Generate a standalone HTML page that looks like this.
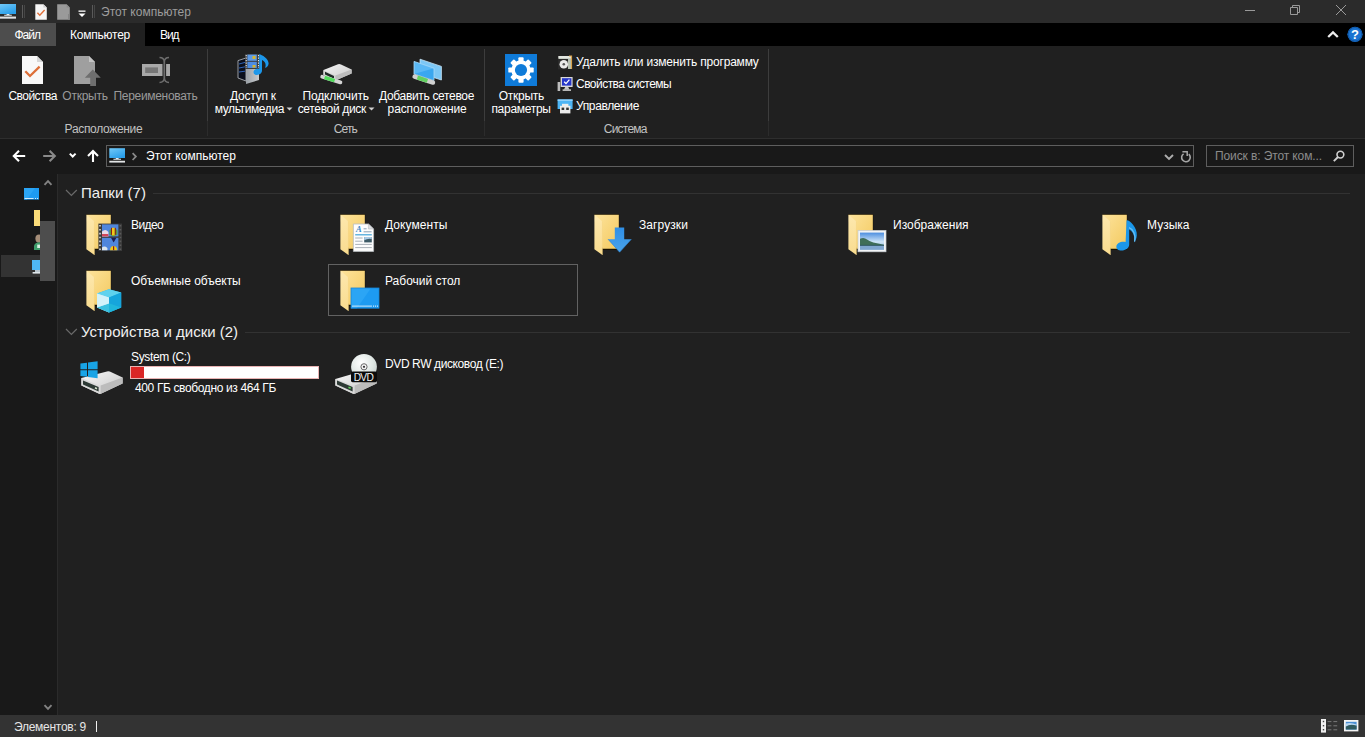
<!DOCTYPE html>
<html lang="ru">
<head>
<meta charset="utf-8">
<title>Этот компьютер</title>
<style>
*{box-sizing:border-box;margin:0;padding:0}
html,body{width:1365px;height:737px;overflow:hidden;background:#202020}
body{font-family:"Liberation Sans","DejaVu Sans",sans-serif;font-size:12px;color:#fff;position:relative}
.abs{position:absolute}
.t{position:absolute;white-space:nowrap;line-height:16px;height:16px}
.c{text-align:center}
svg{position:absolute;overflow:visible}
#titlebar{left:0;top:0;width:1365px;height:23px;background:#2b2b2b}
#tabrow{left:0;top:23px;width:1365px;height:23px;background:#000}
#ribbon{left:0;top:46px;width:1365px;height:92px;background:#202020}
#ribline{left:0;top:138px;width:1365px;height:1px;background:#2e2e2e}
#navbar{left:0;top:139px;width:1365px;height:35px;background:#191919}
#navpane{left:0;top:174px;width:57px;height:541px;background:#191919}
#split{left:57px;top:174px;width:1px;height:541px;background:#2b2b2b}
#content{left:58px;top:174px;width:1307px;height:541px;background:#202020}
#status{left:0;top:715px;width:1365px;height:22px;background:#333333}
.sep{position:absolute;width:1px;background:#3d3d3d}
.grp{color:#c2c2c2}
.dis{color:#9a9a9a}
.hdr{font-size:15px;line-height:20px;height:20px;color:#f0f0f0}
</style>
</head>
<body>
<!-- TITLE BAR -->
<div class="abs" id="titlebar"></div>
<div class="abs" id="tabrow"></div>
<div class="abs" id="ribbon"></div>
<div class="abs" id="ribline"></div>
<div class="abs" id="navbar"></div>
<div class="abs" id="navpane"></div>
<div class="abs" id="split"></div>
<div class="abs" id="content"></div>
<div class="abs" id="status"></div>

<!--TITLE-->
<!-- computer icon -->
<svg style="left:0;top:3px" width="17" height="17" viewBox="0 0 17 17">
 <defs><linearGradient id="mon" x1="0" y1="0" x2="0.6" y2="1"><stop offset="0" stop-color="#72c9f8"/><stop offset="1" stop-color="#2a9fea"/></linearGradient>
 <linearGradient id="base" x1="0" y1="0" x2="0" y2="1"><stop offset="0" stop-color="#ffffff"/><stop offset="1" stop-color="#b4b8bc"/></linearGradient></defs>
 <rect x="-1" y="1" width="17" height="10" fill="url(#mon)"/>
 <path d="M6.6 11H9.4V11.8H11.8V12.8H4.2V11.8H6.6Z" fill="#e4eef4"/>
 <rect x="-1" y="13.6" width="17" height="2.2" fill="url(#base)"/>
</svg>
<div class="abs" style="left:22px;top:5px;width:1px;height:13px;background:#5a5a5a"></div>
<div class="abs" style="left:24px;top:5px;width:1px;height:13px;background:#454545"></div>
<svg style="left:35px;top:4px" width="13" height="16" viewBox="0 0 13 16">
 <path d="M0.3 0.2H8.4L11.8 3.6V15.8H0.3Z" fill="#f6f6f6"/><path d="M8.4 0.2V3.6H11.8Z" fill="#cfcfcf"/>
 <path d="M2.4 8.8L4.8 11.2L9.6 6" fill="none" stroke="#e0703a" stroke-width="1.4"/>
</svg>
<svg style="left:57px;top:4px" width="13" height="16" viewBox="0 0 13 16">
 <path d="M0.2 0.2H9.6L12.8 3.6V15.8H0.2Z" fill="#9a9a9a"/><path d="M9.6 0.2V3.6H12.8Z" fill="#8a8a8a"/>
 <path d="M11 10h1.8v5.8H11z" fill="#868686"/>
</svg>
<svg style="left:78px;top:9.5px" width="8" height="8" viewBox="0 0 8 8">
 <rect x="0.5" y="0.5" width="7" height="1.3" fill="#fff"/><path d="M0.5 3.5H7.5L4 7Z" fill="#fff"/>
</svg>
<div class="abs" style="left:92px;top:5px;width:1px;height:13px;background:#5a5a5a"></div>
<div class="abs" style="left:94px;top:5px;width:1px;height:13px;background:#454545"></div>
<div class="t" style="left:101px;top:4px;color:#9d9d9d;letter-spacing:0.02px">Этот компьютер</div>
<!-- window controls -->
<svg style="left:1240px;top:0" width="125" height="23" viewBox="0 0 125 23" fill="none" stroke="#9a9a9a" stroke-width="1">
 <path d="M5 10.5H15"/>
 <path d="M50.5 7.5H57.5V14.5H50.5Z"/><path d="M52.5 7.5V5.5H59.5V12.5H57.5"/>
 <path d="M96 5L106 15M106 5L96 15"/>
</svg>
<!--TABS-->
<div class="abs" style="left:0;top:23px;width:56px;height:23px;background:#4d4d4d"></div>
<div class="abs" style="left:56px;top:23px;width:89px;height:23px;background:#202020"></div>
<div class="t" style="left:14.5px;top:27px;letter-spacing:-1px">Файл</div>
<div class="t" style="left:70px;top:27px;letter-spacing:-0.23px">Компьютер</div>
<div class="t" style="left:160px;top:27px;letter-spacing:-1.05px">Вид</div>
<svg style="left:1327px;top:29.5px" width="12" height="9" viewBox="0 0 12 9"><path d="M1.2 7L6 2.4L10.8 7" fill="none" stroke="#ececec" stroke-width="2.3"/></svg>
<svg style="left:1347px;top:26px" width="17" height="17" viewBox="0 0 17 17">
 <circle cx="8" cy="8.3" r="7.6" fill="#1a73d1"/><circle cx="8" cy="8.3" r="6.8" fill="none" stroke="#0b4f9c" stroke-width="0.8"/>
 <text x="8" y="13" font-family="Liberation Sans, sans-serif" font-weight="bold" font-size="13" fill="#fff" text-anchor="middle">?</text>
</svg>
<!--RIBBON-->
<!-- group 1: Расположение -->
<svg style="left:22px;top:56px" width="21" height="28" viewBox="0 0 21 28">
 <path d="M0 0H15L21 6V28H0Z" fill="#f8f8f8"/><path d="M15 0V6H21Z" fill="#d6d6d6"/>
 <path d="M3.3 15.3L8 20L17.6 10.6" fill="none" stroke="#dd6f38" stroke-width="2.3"/>
</svg>
<svg style="left:74px;top:56px" width="27" height="30" viewBox="0 0 27 30">
 <path d="M0 0H15L21 6V28H0Z" fill="#9f9f9f"/><path d="M15 0V6H21Z" fill="#c4c4c4"/>
 <path d="M18.8 13.6L26.8 21.8H22V30H16.2V21.8H10.8Z" fill="#6f6f6f"/>
</svg>
<svg style="left:141px;top:56px" width="30" height="28" viewBox="0 0 30 28">
 <rect x="1" y="8" width="28" height="12" fill="#a9a9a9"/>
 <rect x="4.2" y="11.4" width="12.8" height="5.6" fill="#777"/>
 <rect x="21.5" y="7" width="3.6" height="14" fill="#202020"/>
 <path d="M18.5 1.6Q23.2 1.6 23.2 6V22Q23.2 26.4 18.5 26.4M28 1.6Q23.4 1.6 23.4 6V22Q23.4 26.4 28 26.4" fill="none" stroke="#6d6d6d" stroke-width="1.5"/>
</svg>
<div class="t" style="left:8.5px;top:88px;letter-spacing:-0.55px">Свойства</div>
<div class="t dis" style="left:62.3px;top:88px;letter-spacing:-0.25px">Открыть</div>
<div class="t dis" style="left:113.5px;top:88px;letter-spacing:-0.31px">Переименовать</div>
<div class="t grp" style="left:64.6px;top:121px;letter-spacing:-0.32px">Расположение</div>
<div class="sep" style="left:207px;top:49px;height:72px"></div>
<div class="sep" style="left:207px;top:121px;height:15px;background:#2c2c2c"></div>

<!-- group 2: Сеть -->
<svg style="left:237px;top:53px" width="33" height="32" viewBox="0 0 33 32">
 <defs><linearGradient id="twr" x1="0" y1="0" x2="1" y2="0"><stop offset="0" stop-color="#9aa0a6"/><stop offset="1" stop-color="#c8cacc"/></linearGradient></defs>
 <path d="M1 7.6L9 5V28L1 25Z" fill="#0a0f1c"/><path d="M9 4.5L22 8V27L9 31V28Z" fill="url(#twr)"/>
 <path d="M1 7.6L9 5V28L1 25Z" fill="none" stroke="#a9adb2" stroke-width="0.9"/>
 <path d="M2 11L8 9.4M2 15L8 13.8M2 19L8 18.2" stroke="#2f62b5" stroke-width="1"/>
 <rect x="8" y="1" width="15" height="15" fill="#3c3c3c"/><rect x="10.4" y="1.6" width="9.4" height="6.2" fill="#5d9be6"/><rect x="10.4" y="8.8" width="9.4" height="6.2" fill="#4f8de0"/>
 <path d="M9.2 2v13M21.5 2v13" stroke="#e8e8e8" stroke-width="1.1" stroke-dasharray="1.2 1.3"/>
 <rect x="15.5" y="3" width="3" height="3" fill="#d9b52a"/><rect x="15.5" y="12" width="3" height="2.6" fill="#d9b52a"/>
 <path d="M22.2 1.2C25 1.4 31.8 6 31.6 10.4C31.5 13 29.6 14.4 28 14.8C29.4 12 28.6 8.6 25 7V17.6C25 20.4 22.6 22 20 22C17.6 22 16.2 20.4 16.6 18.6C17 16.6 19.4 15.4 22.2 16Z" fill="#1c97ea"/>
</svg>
<svg style="left:319px;top:63px" width="35" height="22" viewBox="0 0 35 22">
 <defs><linearGradient id="hd" x1="0" y1="0" x2="1" y2="1"><stop offset="0" stop-color="#f4f4f4"/><stop offset="1" stop-color="#c9c9c9"/></linearGradient></defs>
 <path d="M4.5 7L19 1.2Q20.5 0.8 22 1.4L32.6 6.4V10.6L16.4 17.6L4.5 12Z" fill="url(#hd)"/>
 <path d="M4.5 7.2L16.4 12.6V17.6L4.5 12Z" fill="#d3d3d3"/>
 <path d="M6 8.8L15 13V15.8L6 11.4Z" fill="#1f2a26"/>
 <path d="M16.4 12.6L32.6 6.4V10.6L16.4 17.6Z" fill="#bdbdbd"/>
 <path d="M3.2 13.8L21.4 19.4" stroke="#d4d4d4" stroke-width="3.8" stroke-linecap="round"/>
 <path d="M5.6 14.5L15.6 17.6" stroke="#52dc5c" stroke-width="3.6"/>
</svg>
<svg style="left:412px;top:58px" width="31" height="27" viewBox="0 0 31 27">
 <path d="M8 1.2L29.4 8.4V22L8 15Z" fill="#7cc7f5"/><path d="M8 1.2L29.4 8.4V22L8 15Z" fill="none" stroke="#c9e6f8" stroke-width="0.8"/>
 <path d="M2 3.4L22 10.2V22.6L2 16Z" fill="#3aa7ef"/><path d="M2 3.4L22 10.2L2 16Z" fill="#5ab8f5"/><path d="M2 3.4L22 10.2V22.6L2 16Z" fill="none" stroke="#a9d9f7" stroke-width="0.8"/>
 <path d="M2.6 18.6L21 24.6" stroke="#d0d0d0" stroke-width="4.4" stroke-linecap="round"/>
 <path d="M5.4 19.5L15.4 22.8" stroke="#62d060" stroke-width="4"/>
</svg>
<div class="t" style="left:230px;top:88px;letter-spacing:-0.23px">Доступ к</div>
<div class="t" style="left:214.8px;top:101px;letter-spacing:-0.41px">мультимедиа</div>
<svg style="left:286px;top:107px" width="7" height="4" viewBox="0 0 7 4"><path d="M0.5 0.5H6.5L3.5 3.6Z" fill="#d0d0d0"/></svg>
<div class="t" style="left:302.4px;top:88px;letter-spacing:-0.13px">Подключить</div>
<div class="t" style="left:297.7px;top:101px;letter-spacing:-0.33px">сетевой диск</div>
<svg style="left:368px;top:107px" width="7" height="4" viewBox="0 0 7 4"><path d="M0.5 0.5H6.5L3.5 3.6Z" fill="#d0d0d0"/></svg>
<div class="t" style="left:379px;top:88px;letter-spacing:-0.33px">Добавить сетевое</div>
<div class="t" style="left:387.6px;top:101px;letter-spacing:-0.14px">расположение</div>
<div class="t grp" style="left:333.8px;top:121px;letter-spacing:-0.9px">Сеть</div>
<div class="sep" style="left:484px;top:49px;height:72px"></div>
<div class="sep" style="left:484px;top:121px;height:15px;background:#2c2c2c"></div>

<!-- group 3: Система -->
<svg style="left:505px;top:54px" width="32" height="32" viewBox="0 0 32 32">
 <rect width="32" height="32" fill="#0f7bd9"/>
 <g transform="translate(16 16)" fill="#fff">
  <circle r="9.7"/>
  <rect x="-2.6" y="-12.7" width="5.2" height="25.4" rx="0.9" transform="rotate(0)"/>
  <rect x="-2.6" y="-12.7" width="5.2" height="25.4" rx="0.9" transform="rotate(45)"/>
  <rect x="-2.6" y="-12.7" width="5.2" height="25.4" rx="0.9" transform="rotate(90)"/>
  <rect x="-2.6" y="-12.7" width="5.2" height="25.4" rx="0.9" transform="rotate(135)"/>
  <circle r="6.1" fill="#0f7bd9"/>
 </g>
</svg>
<div class="t" style="left:498.7px;top:88px;letter-spacing:-0.26px">Открыть</div>
<div class="t" style="left:491.4px;top:101px;letter-spacing:-0.28px">параметры</div>
<!-- small icons -->
<svg style="left:557px;top:54px" width="16" height="16" viewBox="0 0 16 16">
 <rect x="1.5" y="2" width="13" height="13" fill="#b9c2b4"/><rect x="1.5" y="2" width="13" height="2.4" fill="#e3e6e1"/>
 <path d="M12 2L14.5 2V15" stroke="#d9a24a" stroke-width="1.2" fill="none"/>
 <rect x="1" y="5" width="10" height="10.4" fill="#2a2a2a"/>
 <circle cx="6.8" cy="10.2" r="4.3" fill="#e9e9e9"/><circle cx="6.8" cy="10.2" r="1.3" fill="#555"/>
</svg>
<svg style="left:557px;top:76px" width="16" height="16" viewBox="0 0 16 16">
 <rect x="0.6" y="6" width="2.6" height="9" fill="#bdbdbd"/>
 <rect x="3.6" y="1" width="12" height="10" fill="#d9d9d9"/><rect x="5" y="2.2" width="9.4" height="7.4" fill="#2536c9"/>
 <path d="M7.2 5.8L9 7.6L12.4 3.6" stroke="#fff" stroke-width="1.3" fill="none"/>
 <path d="M8.2 11h3l1.2 2.4H7z" fill="#c9c9c9"/><rect x="5.6" y="13.4" width="8.4" height="1.4" fill="#dcdcdc"/>
</svg>
<svg style="left:557px;top:98px" width="16" height="16" viewBox="0 0 16 16">
 <rect x="0.6" y="1.4" width="15" height="9.6" fill="#4db4f5"/><rect x="0.6" y="1.4" width="15" height="1.6" fill="#8fd0fa"/>
 <path d="M3 7.8H13.4V15.4H3Z" fill="#ececec"/><path d="M5 5.8H11.4V8H5Z" fill="#ececec"/>
 <rect x="4.6" y="9.6" width="2.6" height="2.4" fill="#333"/><rect x="9.2" y="9.6" width="2.6" height="2.4" fill="#333"/>
</svg>
<div class="t" style="left:576px;top:54px;letter-spacing:-0.2px">Удалить или изменить программу</div>
<div class="t" style="left:576px;top:76px;letter-spacing:-0.53px">Свойства системы</div>
<div class="t" style="left:576px;top:98px;letter-spacing:-0.37px">Управление</div>
<div class="t grp" style="left:603.8px;top:121px;letter-spacing:-0.78px">Система</div>
<div class="sep" style="left:768px;top:49px;height:72px"></div>
<div class="sep" style="left:768px;top:121px;height:15px;background:#2c2c2c"></div>
<!--ADDRESS-->
<svg style="left:12px;top:149px" width="90" height="14" viewBox="0 0 90 14" fill="none" stroke-width="2.1">
 <path d="M13.2 7H2.2M7 1.8L1.8 7L7 12.2" stroke="#fff"/>
 <path d="M31.2 7H42.4M37.6 1.8L42.8 7L37.6 12.2" stroke="#8a8a8a"/>
 <path d="M57.8 4.6L60.7 7.5L63.6 4.6" stroke="#fff" stroke-width="2"/>
 <path d="M81 13V2.2M76 7L81 2L86 7" stroke="#fff"/>
</svg>
<div class="abs" style="left:106px;top:145px;width:1088px;height:22px;border:1px solid #5e5e5e;background:#191919"></div>
<svg style="left:109px;top:147px" width="17" height="17" viewBox="0 0 17 17">
 <rect x="0.3" y="1.2" width="15.7" height="9.8" fill="url(#mon)"/>
 <path d="M6.8 11H9.6V11.8H12V12.8H4.4V11.8H6.8Z" fill="#e4eef4"/>
 <rect x="0.3" y="13.8" width="15.7" height="1.9" fill="url(#base)"/>
</svg>
<svg style="left:131px;top:152px" width="7" height="9" viewBox="0 0 7 9"><path d="M1.6 1.2L4.9 4.6L1.6 8" fill="none" stroke="#8a8a8a" stroke-width="1.7"/></svg>
<div class="t" style="left:146px;top:148px;letter-spacing:0.02px">Этот компьютер</div>
<svg style="left:1163px;top:153px" width="12" height="8" viewBox="0 0 12 8"><path d="M2 2L6 6L10 2" fill="none" stroke="#adadad" stroke-width="1.9"/></svg>
<svg style="left:1180px;top:150px" width="12" height="13" viewBox="0 0 12 13" fill="none" stroke="#a6a6a6" stroke-width="1.6">
 <path d="M8.8 4.2A4.3 4.3 0 1 1 3.6 3.8"/><path d="M2.4 1.8H7.2V6" stroke-width="1.5"/>
</svg>
<div class="abs" style="left:1206px;top:145px;width:148px;height:22px;border:1px solid #5e5e5e;background:#191919"></div>
<div class="t" style="left:1215px;top:148px;color:#8c8c8c;letter-spacing:-0.11px">Поиск в: Этот ком...</div>
<svg style="left:1333px;top:150px" width="12" height="12" viewBox="0 0 12 12" fill="none" stroke="#d0d0d0" stroke-width="1.6">
 <circle cx="7.4" cy="4.6" r="3.4"/><path d="M5 7L0.8 11.2" stroke-width="1.9"/>
</svg>
<!--NAV-->
<div class="abs" style="left:1px;top:255px;width:39px;height:22px;background:#333"></div>
<svg style="left:44px;top:179px" width="8" height="7" viewBox="0 0 8 7"><path d="M0.5 5.8L4 2.1L7.5 5.8" fill="none" stroke="#828282" stroke-width="1.9"/></svg>
<svg style="left:24px;top:188px" width="15" height="12" viewBox="0 0 15 12">
 <rect width="15" height="11.6" fill="#1d9bf2"/><path d="M0 0H11L3 11.6H0Z" fill="#2ba5f5"/>
 <rect x="0.6" y="10" width="9" height="0.9" fill="#e8f4fd"/><rect x="11" y="10" width="1" height="0.9" fill="#e8f4fd"/><rect x="13" y="10" width="1" height="0.9" fill="#e8f4fd"/>
</svg>
<div class="abs" style="left:34px;top:210px;width:6px;height:16px;background:#fadb79"></div>
<svg style="left:34px;top:234px" width="6" height="16" viewBox="0 0 6 16">
 <ellipse cx="5" cy="4.6" rx="3.6" ry="4.2" fill="#a58d78"/><path d="M0 16V11.4Q1.4 8.2 6 8.2V16Z" fill="#3e9c6a"/><rect x="3.2" y="10.6" width="2.8" height="3.4" fill="#d8efe2"/>
</svg>
<svg style="left:32px;top:259px" width="8" height="16" viewBox="0 0 8 16">
 <rect x="0" y="1" width="8" height="10" fill="#4fb7f6"/><rect x="3" y="11" width="5" height="2" fill="#b9c6cf"/><rect x="0.6" y="13" width="7.4" height="1.6" fill="#dfe6ea"/>
</svg>
<div class="abs" style="left:40px;top:221px;width:15px;height:60px;background:#4d4d4d"></div>
<svg style="left:44px;top:704px" width="8" height="7" viewBox="0 0 8 7"><path d="M0.5 1.2L4 4.9L7.5 1.2" fill="none" stroke="#828282" stroke-width="1.9"/></svg>
<!--CONTENT-->
<svg width="0" height="0" style="left:0;top:0">
 <defs>
  <linearGradient id="fback" x1="0" y1="0" x2="1" y2="1"><stop offset="0" stop-color="#fde39b"/><stop offset="1" stop-color="#f3c95f"/></linearGradient>
  <linearGradient id="ffront" x1="0" y1="0" x2="0" y2="1"><stop offset="0" stop-color="#fde8ae"/><stop offset="1" stop-color="#f9dc8f"/></linearGradient>
  <linearGradient id="blu" x1="0" y1="0" x2="0" y2="1"><stop offset="0" stop-color="#2f8fe6"/><stop offset="1" stop-color="#4aa3ea"/></linearGradient>
  <linearGradient id="sky" x1="0" y1="0" x2="0" y2="1"><stop offset="0" stop-color="#4d8fe0"/><stop offset="0.55" stop-color="#cfe5f7"/><stop offset="1" stop-color="#6f9fcd"/></linearGradient>
  <linearGradient id="drv" x1="0" y1="0" x2="1" y2="1"><stop offset="0" stop-color="#fafafa"/><stop offset="1" stop-color="#c4c4c4"/></linearGradient>
  <radialGradient id="disc" cx="0.4" cy="0.35" r="0.75"><stop offset="0" stop-color="#ffffff"/><stop offset="0.6" stop-color="#dfe7e4"/><stop offset="1" stop-color="#c4cbc9"/></radialGradient>
 </defs>
</svg>
<svg style="left:65px;top:189px" width="13" height="8" viewBox="0 0 13 8"><path d="M1 1L6.4 6.4L11.8 1" fill="none" stroke="#6a6a6a" stroke-width="1.2"/></svg>
<div class="t hdr" style="left:81px;top:183px;letter-spacing:0.03px">Папки (7)</div>
<div class="abs" style="left:153px;top:193px;width:1197px;height:1px;background:#323232"></div>
<div class="abs" style="left:328px;top:264px;width:250px;height:52px;border:1px solid #626262"></div>
<svg style="left:86px;top:214px" width="46" height="42" viewBox="0 0 46 42"><g><path d="M0 0H25.2V36H8.6V39Z" fill="#171000"/><path d="M0.8 0.8H24.8V34.8H8.4Z" fill="url(#fback)"/><path d="M0.4 0.6L8.4 7.4V41L0.4 35.2Z" fill="url(#ffront)"/><path d="M8.4 7.4V41" stroke="#f2d27c" stroke-width="0.5"/></g><g transform="translate(12.4 9.6)">
 <rect x="0" y="0" width="23.6" height="27.4" fill="#3a3a3a"/>
 <path d="M1.6 1.4V27" stroke="#d9d9d9" stroke-width="1.6" stroke-dasharray="1.6 2.3"/>
 <path d="M22 1.4V27" stroke="#5a5a5a" stroke-width="1.6" stroke-dasharray="1.6 2.3"/>
 <rect x="3.6" y="0.8" width="16.4" height="12" fill="#4f86dc"/><rect x="3.6" y="14.2" width="16.4" height="12.4" fill="#4f86dc"/>
 <path d="M3.6 8Q7 4.6 10 8.4L10 12.8H3.6Z" fill="#e8d9e6"/><path d="M3.6 10.4H10V12.8H3.6Z" fill="#d0475a"/>
 <path d="M11 6.6Q15 2.6 19 6.6V11L15 12.8L11 11Z" fill="#5a9a3a"/><rect x="13.6" y="4.2" width="2.8" height="7.6" fill="#f0c818"/><rect x="12.6" y="4.2" width="1" height="7" fill="#8a1a1a"/><rect x="16.4" y="4.2" width="1" height="7" fill="#8a1a1a"/>
 <path d="M12.6 14.2H18L15.2 19Z" fill="#1d1d4d"/>
 <path d="M3.6 24Q6 21.8 9 24.4V26.6H3.6Z" fill="#dbe6ee"/>
 <path d="M11.6 26.6Q12 22.4 15.2 22.4Q18.4 22.4 18.8 26.6Z" fill="#f0c818"/><rect x="14.6" y="22.6" width="1.2" height="4" fill="#8a1a1a"/>
</g></svg>
<div class="t" style="left:131px;top:217px;letter-spacing:-0.6px">Видео</div>
<svg style="left:340px;top:214px" width="46" height="42" viewBox="0 0 46 42"><g><path d="M0 0H25.2V36H8.6V39Z" fill="#171000"/><path d="M0.8 0.8H24.8V34.8H8.4Z" fill="url(#fback)"/><path d="M0.4 0.6L8.4 7.4V41L0.4 35.2Z" fill="url(#ffront)"/><path d="M8.4 7.4V41" stroke="#f2d27c" stroke-width="0.5"/></g><g transform="translate(13 9.6)">
 <path d="M0.4 0.4H15.4L20.6 5.4V27.8H0.4Z" fill="#fdfdfd" stroke="#b8bcc0" stroke-width="0.8"/>
 <path d="M15.4 0.4V5.4H20.6Z" fill="#dcdfe2" stroke="#b8bcc0" stroke-width="0.6"/>
 <text x="3" y="8.6" font-family="Liberation Serif, serif" font-style="italic" font-weight="bold" font-size="8.5" fill="#3a86c4">A</text>
 <path d="M10.6 5.2H13.6M10.6 8.2H18.6" stroke="#8aa0b4" stroke-width="1"/>
 <path d="M2.2 11.2H18.8" stroke="#3fa2d8" stroke-width="1.2"/>
 <path d="M2.2 14.4H9.6M2.2 17.6H9.6M2.2 20.8H18.8M2.2 24H18.8" stroke="#a9b0b8" stroke-width="1"/>
 <rect x="11.2" y="13.4" width="7.6" height="5.4" fill="#3d5a66"/><path d="M11.2 13.4H18.8V15.4Q15 14.4 11.2 16.6Z" fill="#a9cbe6"/>
</g></svg>
<div class="t" style="left:385px;top:217px;letter-spacing:0.08px">Документы</div>
<svg style="left:594px;top:214px" width="46" height="42" viewBox="0 0 46 42"><g><path d="M0 0H25.2V36H8.6V39Z" fill="#171000"/><path d="M0.8 0.8H24.8V34.8H8.4Z" fill="url(#fback)"/><path d="M0.4 0.6L8.4 7.4V41L0.4 35.2Z" fill="url(#ffront)"/><path d="M8.4 7.4V41" stroke="#f2d27c" stroke-width="0.5"/></g><path d="M20.8 13.4H30.2V25.2H37.4L25.6 38.2L14 25.2H20.8Z" fill="url(#blu)"/><path d="M14 25.2L25.6 38.2L37.4 25.2" fill="none" stroke="#2a7fd0" stroke-width="0.6"/></svg>
<div class="t" style="left:639px;top:217px;letter-spacing:0.08px">Загрузки</div>
<svg style="left:848px;top:214px" width="46" height="42" viewBox="0 0 46 42"><g><path d="M0 0H25.2V36H8.6V39Z" fill="#171000"/><path d="M0.8 0.8H24.8V34.8H8.4Z" fill="url(#fback)"/><path d="M0.4 0.6L8.4 7.4V41L0.4 35.2Z" fill="url(#ffront)"/><path d="M8.4 7.4V41" stroke="#f2d27c" stroke-width="0.5"/></g><g transform="translate(10 16.4)">
 <rect x="0" y="0" width="28" height="21.4" fill="#f2f4f5"/><rect x="0" y="0" width="28" height="21.4" fill="none" stroke="#c5cbd0" stroke-width="0.7"/>
 <rect x="2" y="2.2" width="24" height="17" fill="url(#sky)"/>
 <path d="M2 8.4Q6 6.4 9 9.2Q13 12.4 26 14.4V15.6H2Z" fill="#3f6e58"/>
 <path d="M2 15.2H26V19.2H2Z" fill="#7fa6cf"/><path d="M2 14.4H26V15.6H2Z" fill="#2f5566" opacity="0.7"/>
</g></svg>
<div class="t" style="left:893px;top:217px;letter-spacing:0.02px">Изображения</div>
<svg style="left:1102px;top:214px" width="46" height="42" viewBox="0 0 46 42"><g><path d="M0 0H25.2V36H8.6V39Z" fill="#171000"/><path d="M0.8 0.8H24.8V34.8H8.4Z" fill="url(#fback)"/><path d="M0.4 0.6L8.4 7.4V41L0.4 35.2Z" fill="url(#ffront)"/><path d="M8.4 7.4V41" stroke="#f2d27c" stroke-width="0.5"/></g><path d="M24.6 6.4C27.4 5.8 35.4 13.4 34.8 21.4C34.6 24.6 33.2 27.2 32.2 28.4C33 23.6 31.6 17.6 27.2 15.6V30.6C27.2 34.4 23.4 36.6 19.6 36.6C16.4 36.6 14 34.8 14.4 32.2C14.8 29.2 19 27 23.6 28Z" fill="#1b97ea"/><path d="M27 13.6C31.4 15.2 34 20.8 32.6 27.6" fill="none" stroke="#6cc0f3" stroke-width="1.2"/></svg>
<div class="t" style="left:1147px;top:217px">Музыка</div>
<svg style="left:86px;top:270px" width="46" height="42" viewBox="0 0 46 42"><g><path d="M0 0H25.2V36H8.6V39Z" fill="#171000"/><path d="M0.8 0.8H24.8V34.8H8.4Z" fill="url(#fback)"/><path d="M0.4 0.6L8.4 7.4V41L0.4 35.2Z" fill="url(#ffront)"/><path d="M8.4 7.4V41" stroke="#f2d27c" stroke-width="0.5"/></g><g transform="translate(10.6 18)">
 <path d="M12.4 1.2L24.6 4.6V19.4L12.4 24.6L0.4 19.4V5.4Z" fill="#2ab4e2"/>
 <path d="M12.4 1.2L24.6 4.6L12.4 9.4L0.4 5.4Z" fill="#5fd2ee"/>
 <path d="M0.4 5.4L12.4 9.4V24.6L0.4 19.4Z" fill="#c3edf7"/>
 <path d="M12.4 9.4L24.6 4.6V19.4L12.4 24.6Z" fill="#16a5dc"/>
 <path d="M0.4 19.4L12.4 15.2L24.6 19.4L12.4 24.6Z" fill="#22b8dc" opacity="0.85"/>
 <path d="M0.4 5.4L12.4 9.4V15.4L0.4 19.4Z" fill="#d4f2f9" opacity="0.9"/>
</g></svg>
<div class="t" style="left:131px;top:273px;letter-spacing:-0.04px">Объемные объекты</div>
<svg style="left:340px;top:270px" width="46" height="42" viewBox="0 0 46 42"><g><path d="M0 0H25.2V36H8.6V39Z" fill="#171000"/><path d="M0.8 0.8H24.8V34.8H8.4Z" fill="url(#fback)"/><path d="M0.4 0.6L8.4 7.4V41L0.4 35.2Z" fill="url(#ffront)"/><path d="M8.4 7.4V41" stroke="#f2d27c" stroke-width="0.5"/></g><g transform="translate(11 18)">
 <rect x="0" y="0" width="28" height="20.2" fill="#1d9bf2"/><path d="M0 0H20L6 20.2H0Z" fill="#2ba5f5"/>
 <rect x="0" y="0" width="28" height="20.2" fill="none" stroke="#1684d8" stroke-width="0.8"/>
 <rect x="1" y="17.6" width="20" height="1" fill="#cfe9fb"/><rect x="22" y="17.6" width="1.1" height="1" fill="#fff"/><rect x="24" y="17.6" width="1.1" height="1" fill="#fff"/><rect x="26" y="17.6" width="1.1" height="1" fill="#fff"/>
</g></svg>
<div class="t" style="left:385px;top:273px">Рабочий стол</div>
<svg style="left:65px;top:328px" width="13" height="8" viewBox="0 0 13 8"><path d="M1 1L6.4 6.4L11.8 1" fill="none" stroke="#6a6a6a" stroke-width="1.2"/></svg>
<div class="t hdr" style="left:81px;top:322px;letter-spacing:-0.01px">Устройства и диски (2)</div>
<div class="abs" style="left:245px;top:332px;width:1105px;height:1px;background:#323232"></div>
<!-- C: drive -->
<svg style="left:80px;top:361px" width="44" height="34" viewBox="0 0 44 34">
 <path d="M1.4 17L27 10.4Q28.4 10 29.8 10.6L42.6 16.4V22.6L21.4 32.6Q20 33.2 18.6 32.6L1.4 24.6Z" fill="url(#drv)"/>
 <path d="M1.4 17L19.4 24.6Q20 24.8 20.6 24.6V32.9Q20 33.1 18.6 32.6L1.4 24.6Z" fill="#d9d9d9"/>
 <path d="M20.6 24.6L42.6 16.4V22.6L21.4 32.6L20.6 32.9Z" fill="#bcbcbc"/>
 <path d="M3 19.4L18.6 26V30.4L3 23.6Z" fill="#2d3a35"/><rect x="15" y="26.4" width="2.2" height="1.6" fill="#d9e6d0" transform="rotate(22 16 27)"/>
 <path d="M0.4 2.6L7 1.7V8.2H0.4ZM8 1.5L17.6 0.2V8.2H8ZM0.4 9.2H7V15.8L0.4 14.9ZM8 9.2H17.6V17.3L8 16Z" fill="#18a4e6"/>
</svg>
<div class="t" style="left:131px;top:349px;letter-spacing:-0.35px">System (C:)</div>
<div class="abs" style="left:130px;top:366px;width:189px;height:13px;background:#fff;border:1px solid #e9b3b3"></div>
<div class="abs" style="left:131px;top:367px;width:13px;height:11px;background:#da2626"></div>
<div class="t" style="left:135px;top:380px;letter-spacing:-0.37px">400 ГБ свободно из 464 ГБ</div>
<!-- DVD drive -->
<svg style="left:334px;top:352px" width="44" height="43" viewBox="0 0 44 43">
 <path d="M1.4 27L27 19.4Q28.4 19 29.8 19.6L42.6 25.4V31.6L21.4 41.6Q20 42.2 18.6 41.6L1.4 33.6Z" fill="url(#drv)"/>
 <path d="M1.4 27L19.4 33.6Q20 33.8 20.6 33.6V41.9Q20 42.1 18.6 41.6L1.4 33.6Z" fill="#d9d9d9"/>
 <path d="M20.6 33.6L42.6 25.4V31.6L21.4 41.6L20.6 41.9Z" fill="#bcbcbc"/>
 <path d="M3 28.4L18.6 35V39.4L3 32.6Z" fill="#2d3a35"/><rect x="14.4" y="35" width="2.4" height="1.6" fill="#5fd05a" transform="rotate(22 15.6 35.8)"/>
 <circle cx="30" cy="14.8" r="12.9" fill="url(#disc)"/>
 <circle cx="30" cy="14.8" r="3.1" fill="#f4f4f4" stroke="#6a6a6a" stroke-width="1"/><circle cx="30" cy="14.8" r="1.1" fill="#333"/>
 <rect x="17" y="19.6" width="26" height="10.6" rx="1.6" fill="#0b0b0b"/>
 <text x="29.4" y="28.6" font-family="Liberation Sans, sans-serif" font-size="10.2" fill="#f2f2f2" text-anchor="middle" letter-spacing="-0.7">DVD</text>
</svg>
<div class="t" style="left:385px;top:356px;letter-spacing:-0.39px">DVD RW дисковод (E:)</div>
<!--STATUS-->
<div class="t" style="left:14px;top:719px;color:#e6e6e6;letter-spacing:-0.27px">Элементов: 9</div>
<div class="abs" style="left:96px;top:721px;width:1px;height:11px;background:#f0f0f0"></div>
<svg style="left:1321px;top:719px" width="17" height="14" viewBox="0 0 17 14">
 <rect x="0" y="0" width="5" height="13.6" fill="#f0f0f0"/>
 <rect x="1.8" y="1.8" width="1.4" height="1.4" fill="#444"/><rect x="1.8" y="6" width="1.4" height="1.4" fill="#444"/><rect x="1.8" y="10" width="1.4" height="1.4" fill="#444"/>
 <path d="M6.6 2.6H10.4M12.4 2.6H16.2M6.6 6.8H10.4M12.4 6.8H16.2M6.6 10.8H10.4M12.4 10.8H16.2" stroke="#7a7a7a" stroke-width="1"/>
</svg>
<svg style="left:1344px;top:720px" width="15" height="12" viewBox="0 0 15 12">
 <rect x="0" y="0" width="14.4" height="11.4" fill="#f4f4f4"/><rect x="1.8" y="1.8" width="10.8" height="7.8" fill="#4a8fd6"/>
 <path d="M1.8 6.4Q6 3.4 12.6 5.4V9.6H1.8Z" fill="#2f5a60"/><path d="M1.8 3.6Q7 2.2 12.6 4.6V5.6Q6 3.6 1.8 6.4Z" fill="#b9d6ee"/>
</svg>
</body>
</html>
